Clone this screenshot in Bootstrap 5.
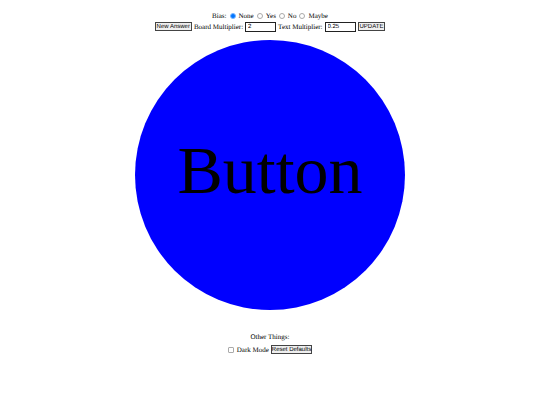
<!DOCTYPE html>
<html lang="en">
<head>
<meta charset="utf-8">
<meta name="viewport" content="width=device-width, initial-scale=1">
<title>Button</title>
<link href="https://cdn.jsdelivr.net/npm/bootstrap@5.3.0/dist/css/bootstrap.min.css" rel="stylesheet">
<style>
body { font-family: "Liberation Serif", "Times New Roman", serif; font-size: 7px; line-height: 10px; color: #000; background: #fff; text-rendering: geometricPrecision; }
main { padding-top: 10px; }
.tool-line { min-height: 11px; gap: 2px; }
.choices { gap: 3px; }
.choice { gap: 3px; }
.choice input { appearance: none; width: 6px; height: 6px; margin: 0; flex: none; background: #fff; border: 1px solid #aaa; border-radius: 1px; }
.choice input[type="radio"] { border-radius: 50%; }
.choice input[type="radio"]:checked { border-color: #7ab8ff; background: #0075ff; }
.choice input[type="checkbox"]:checked { background: #0075ff; }
.tool-btn, .tool-input { font-family: "Liberation Sans", Arial, sans-serif; font-size: 6px; color: #000; border-radius: 0; text-rendering: inherit; }
.tool-btn { line-height: 6px; padding: 1px 1px 0; background: #efefef; border: 1px solid #444; }
.tool-btn.tight { padding: 1px 0 0; }
.tool-input { width: 31px; line-height: 8px; padding: 0 2px; background: #fff; border: 1px solid #222; }
.big-button { width: 50vw; aspect-ratio: 1; margin-top: 8px; padding: 0 0 10px; font-size: 68px; line-height: 1; color: #000; background: #00f; border: 0; }
.other { margin-top: 22px; }
.other .tool-line { margin-top: 2px; }
</style>
</head>
<body>
<main class="d-flex flex-column align-items-center">
  <form class="d-flex flex-column align-items-center">
    <div class="tool-line choices d-flex align-items-center" role="radiogroup" aria-labelledby="bias">
      <span id="bias">Bias:</span>
      <label class="choice d-flex align-items-center"><input type="radio" name="bias" checked>None</label>
      <label class="choice d-flex align-items-center"><input type="radio" name="bias">Yes</label>
      <label class="choice d-flex align-items-center"><input type="radio" name="bias">No</label>
      <label class="choice d-flex align-items-center"><input type="radio" name="bias">Maybe</label>
    </div>
    <div class="tool-line d-flex align-items-center">
      <button type="button" class="tool-btn">New Answer</button>
      <label for="board">Board Multiplier:</label>
      <input id="board" class="tool-input" type="text" value="2">
      <label for="text">Text Multiplier:</label>
      <input id="text" class="tool-input" type="text" value="0.25">
      <button type="button" class="tool-btn">UPDATE</button>
    </div>
  </form>
  <button type="button" class="big-button rounded-circle">Button</button>
  <section class="other d-flex flex-column align-items-center">
    <div>Other Things:</div>
    <div class="tool-line d-flex align-items-center">
      <label class="choice d-flex align-items-center"><input type="checkbox">Dark Mode</label>
      <button type="button" class="tool-btn tight">Reset Defaults</button>
    </div>
  </section>
</main>
<script src="https://cdn.jsdelivr.net/npm/bootstrap@5.3.0/dist/js/bootstrap.bundle.min.js"></script>
</body>
</html>
